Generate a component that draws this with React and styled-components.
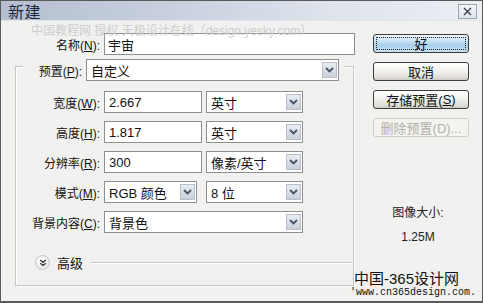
import React from 'react'
import styled, { createGlobalStyle } from 'styled-components'

const GlobalStyle = createGlobalStyle`
  html, body { margin: 0; padding: 0; background: #fff; }
  body { font-family: "Liberation Sans", "Noto Sans CJK SC", sans-serif; font-size: 12px; color: #111; }
`

const Window = styled.div`
  position: relative;
  width: 483px;
  height: 303px;
  box-sizing: border-box;
  border: 1px solid #5a5a5a;
  border-bottom-width: 2px;
  background: #f1f1ef;
  display: flex;
  flex-direction: column;
  overflow: hidden;
`

const TitleBar = styled.div`
  height: 20px;
  display: flex;
  align-items: center;
  justify-content: space-between;
  padding: 0 4px 0 7px;
  background: linear-gradient(90deg, #b4bfd1 0%, #c8d0de 35%, #dfe4ed 70%, #eceef3 100%);
  box-shadow: inset 0 -1px 0 #dfe3ea;
`

const Title = styled.span`
  font-size: 16px;
  color: #1d2740;
  letter-spacing: 0.5px;
`

const CloseButton = styled.div`
  width: 17px;
  height: 13px;
  border: 1px solid #9aa3b0;
  background: linear-gradient(#f4f6f9, #dde2ea);
  display: flex;
  align-items: center;
  justify-content: center;
  margin-right: 1px;
`

const Main = styled.div`
  display: flex;
  padding-top: 12px;
`

const LeftCol = styled.div`
  width: 359px;
  display: flex;
  flex-direction: column;
`

const NameRow = styled.div`
  display: grid;
  grid-template-columns: 99px 251px;
  column-gap: 4px;
  align-items: center;
`

const Label = styled.label`
  text-align: right;
  white-space: nowrap;
  font-size: 12px;
  color: #111;
  u { text-decoration: underline; text-underline-offset: 1px; }
`

const Field = styled.div`
  height: 22px;
  box-sizing: border-box;
  border: 1px solid #8e8f8f;
  background: #fff;
  display: flex;
  align-items: center;
  padding-left: ${p => p.$pad || 4}px;
  font-size: 13px;
  color: #111;
  width: ${p => (p.$w ? `${p.$w}px` : 'auto')};
  grid-column: ${p => p.$span || 'auto'};
`

const SelectBox = styled(Field)`
  justify-content: space-between;
  padding-right: 1px;
`

const DropButton = styled.span`
  width: 15px;
  height: 16px;
  box-sizing: border-box;
  border: 1px solid #b9bfc9;
  background: linear-gradient(#e9edf3, #c9d0da);
  display: flex;
  align-items: center;
  justify-content: center;
`

const Group = styled.div`
  margin: 11px 0 0 14px;
  width: 339px;
  box-sizing: border-box;
  border: 1px solid #c6c6c2;
  box-shadow: inset 1px 1px 0 #fff, 1px 1px 0 #fff;
  padding-bottom: 15px;
`

const Legend = styled.div`
  margin: -8px 0 0 7px;
  padding-right: 6px;
  width: 316px;
  background: #f1f1ef;
  display: grid;
  grid-template-columns: 59px 253px;
  column-gap: 4px;
  align-items: center;
`

const Fields = styled.div`
  margin-top: 10px;
  display: grid;
  grid-template-columns: 84px 98px 97px;
  column-gap: 4px;
  row-gap: 8px;
  align-items: center;
`

const Advanced = styled.div`
  margin: 22px 0 0 19px;
  display: flex;
  align-items: center;
  height: 15px;
`

const RoundToggle = styled.span`
  width: 15px;
  height: 15px;
  box-sizing: border-box;
  border-radius: 50%;
  border: 1px solid #c4c4c4;
  background: radial-gradient(circle at 40% 35%, #ffffff, #e2e2e2);
  display: flex;
  align-items: center;
  justify-content: center;
`

const AdvText = styled.span`
  margin-left: 7px;
  font-size: 13px;
  color: #111;
`

const AdvLine = styled.span`
  flex: 1;
  margin: 0 1px 0 7px;
  border-top: 1px solid #c6c6c2;
  border-bottom: 1px solid #fff;
`

const RightCol = styled.div`
  margin-left: 13px;
  width: 96px;
  display: flex;
  flex-direction: column;
  gap: 9px;
  padding-top: 1px;
`

const Button = styled.div`
  height: 19px;
  box-sizing: border-box;
  border: 1px solid ${p => (p.$disabled ? '#cfcdc4' : '#3d3d3d')};
  border-radius: 3px;
  display: flex;
  align-items: center;
  justify-content: center;
  font-size: 13px;
  color: ${p => (p.$disabled ? '#b3b1a6' : '#111')};
  background: ${p =>
    p.$primary
      ? 'linear-gradient(#eef6fc 0%, #cfe6f6 30%, #a9d0ec 60%, #c9e3f4 100%)'
      : p.$disabled
      ? '#f3f3f0'
      : 'linear-gradient(#ffffff 0%, #f2f2ef 45%, #dedcd6 85%, #cfccc4 100%)'};
  position: relative;
`

const FocusRing = styled.span`
  position: absolute;
  inset: 2px;
  border: 1px dotted #222;
  border-radius: 1px;
`

const SizeInfo = styled.div`
  margin-top: 57px;
  display: flex;
  flex-direction: column;
  align-items: center;
  gap: 10px;
  padding-right: 6px;
  font-size: 12px;
  color: #222;
`

const TopMark = styled.div`
  position: absolute;
  left: 30px;
  top: 20px;
  font-size: 12px;
  color: #cdcdcd;
  white-space: pre;
`

const CornerMark = styled.div`
  position: absolute;
  right: 6px;
  bottom: 3px;
  display: flex;
  flex-direction: column;
  align-items: flex-end;
  gap: 2px;
  line-height: 1;
`

const CornerTitle = styled.span`
  font-size: 15px;
  color: #111;
  margin-right: 17px;
`

const CornerUrl = styled.span`
  font-family: "Liberation Mono", "DejaVu Sans Mono", monospace;
  font-size: 10px;
  color: #111;
`

const Chevron = () => (
  <svg width="9" height="6" viewBox="0 0 9 6">
    <path d="M1 1 L4.5 4.5 L8 1" fill="none" stroke="#4b5464" strokeWidth="1.8" />
  </svg>
)

const Select = ({ children, w, span }) => (
  <SelectBox $w={w} $span={span}>
    <span>{children}</span>
    <DropButton><Chevron /></DropButton>
  </SelectBox>
)

const rows = [
  { label: '宽度', key: 'W', value: '2.667', unit: '英寸' },
  { label: '高度', key: 'H', value: '1.817', unit: '英寸' },
  { label: '分辨率', key: 'R', value: '300', unit: '像素/英寸' },
]

export default function App() {
  return (
    <>
      <GlobalStyle />
      <Window>
        <TitleBar>
          <Title>新建</Title>
          <CloseButton>
            <svg width="9" height="9" viewBox="0 0 9 9">
              <path d="M1 1 L8 8 M8 1 L1 8" stroke="#3a4150" strokeWidth="1.4" />
            </svg>
          </CloseButton>
        </TitleBar>
        <TopMark>中国教程网 授权 天极设计在线（design.yesky.com）</TopMark>
        <Main>
          <LeftCol>
            <NameRow>
              <Label>名称(<u>N</u>):</Label>
              <Field $pad={3}>宇宙</Field>
            </NameRow>
            <Group>
              <Legend>
                <Label>预置(<u>P</u>):</Label>
                <Select>自定义</Select>
              </Legend>
              <Fields>
                {rows.map(r => (
                  <React.Fragment key={r.key}>
                    <Label>{r.label}(<u>{r.key}</u>):</Label>
                    <Field>{r.value}</Field>
                    <Select>{r.unit}</Select>
                  </React.Fragment>
                ))}
                <Label>模式(<u>M</u>):</Label>
                <Select w={93}>RGB 颜色</Select>
                <Select>8 位</Select>
                <Label>背景内容(<u>C</u>):</Label>
                <Select span="2 / 4">背景色</Select>
              </Fields>
              <Advanced>
                <RoundToggle>
                  <svg width="8" height="8" viewBox="0 0 8 8">
                    <path d="M1.2 1 L4 3.3 L6.8 1 M1.2 4.2 L4 6.5 L6.8 4.2" fill="none" stroke="#333" strokeWidth="1.3" />
                  </svg>
                </RoundToggle>
                <AdvText>高级</AdvText>
                <AdvLine />
              </Advanced>
            </Group>
          </LeftCol>
          <RightCol>
            <Button $primary>
              <FocusRing />
              好
            </Button>
            <Button>取消</Button>
            <Button>存储预置(<u>S</u>)</Button>
            <Button $disabled>删除预置(D)...</Button>
            <SizeInfo>
              <span>图像大小:</span>
              <span>1.25M</span>
            </SizeInfo>
          </RightCol>
        </Main>
        <CornerMark>
          <CornerTitle>中国-365设计网</CornerTitle>
          <CornerUrl>'www.cn365design.com.</CornerUrl>
        </CornerMark>
      </Window>
    </>
  )
}
